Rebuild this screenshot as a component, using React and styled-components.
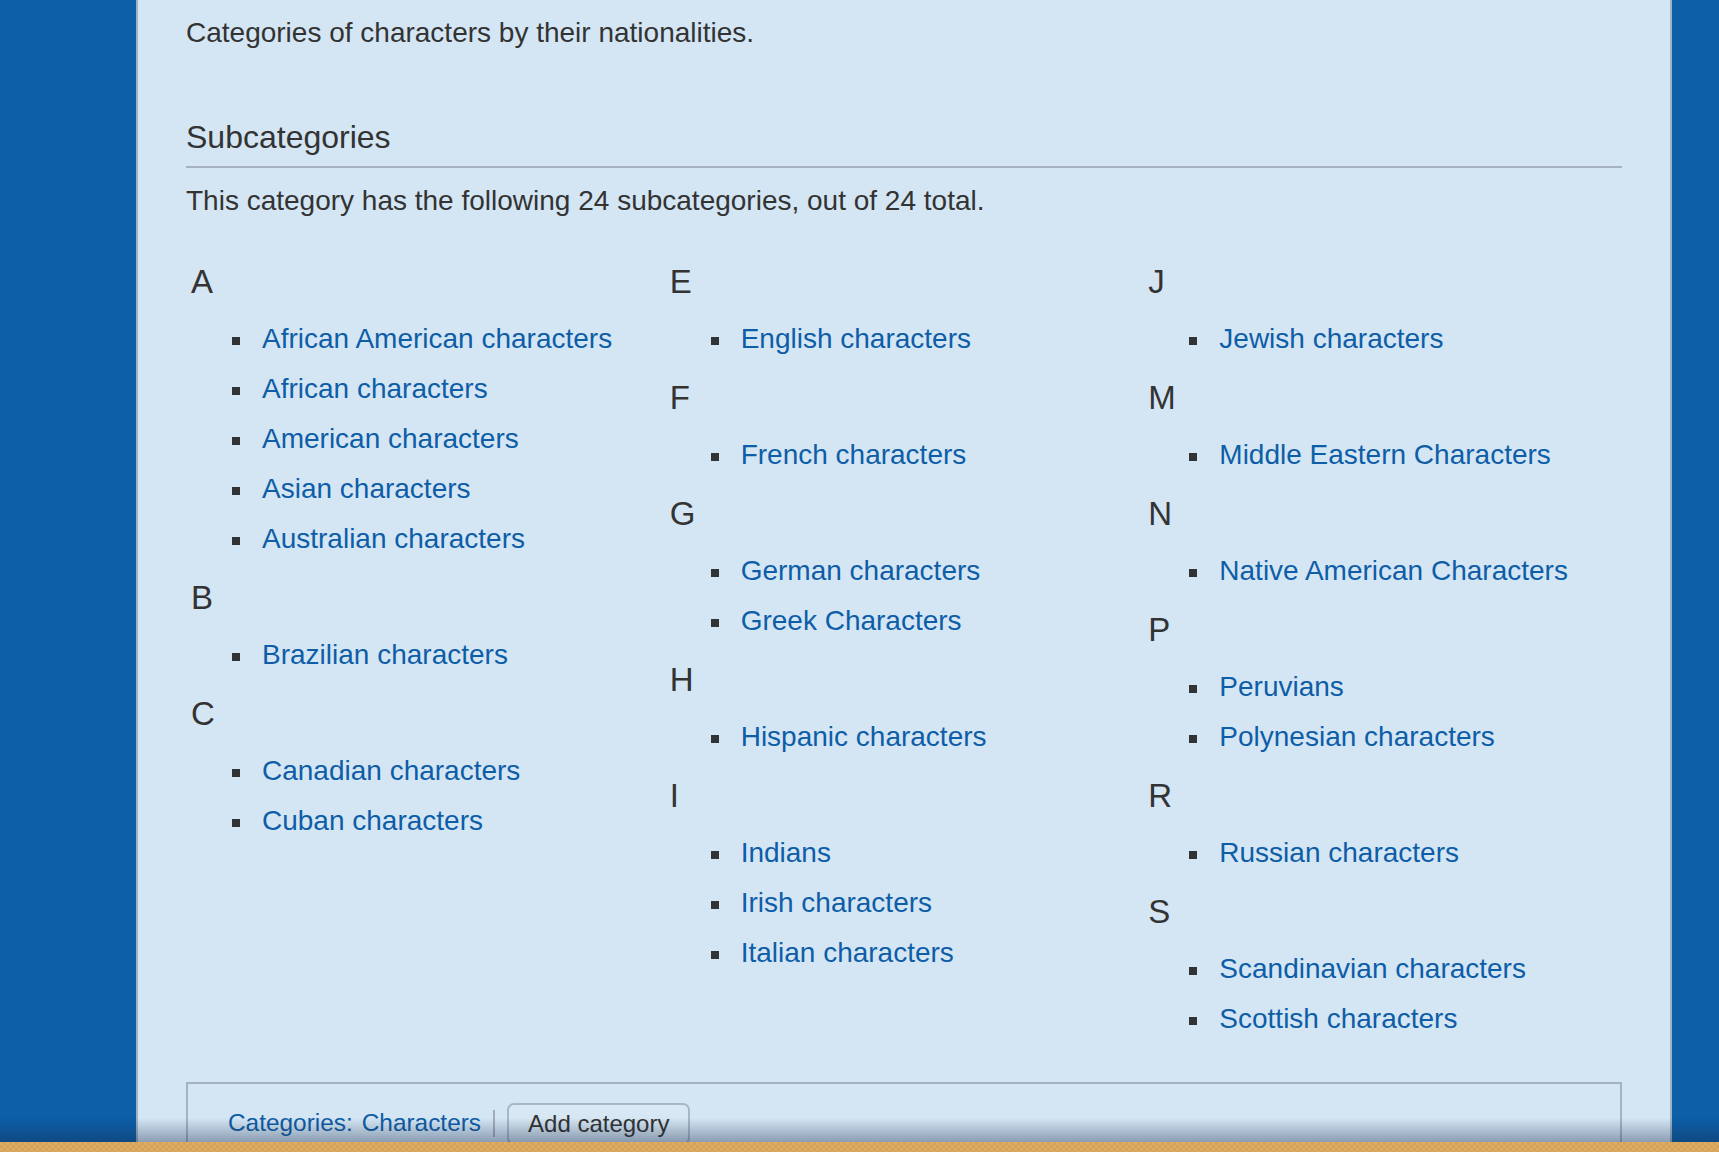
import React from "react";
import styled, { createGlobalStyle } from "styled-components";

const groups = [
  [
    { letter: "A", items: ["African American characters", "African characters", "American characters", "Asian characters", "Australian characters"] },
    { letter: "B", items: ["Brazilian characters"] },
    { letter: "C", items: ["Canadian characters", "Cuban characters"] },
  ],
  [
    { letter: "E", items: ["English characters"] },
    { letter: "F", items: ["French characters"] },
    { letter: "G", items: ["German characters", "Greek Characters"] },
    { letter: "H", items: ["Hispanic characters"] },
    { letter: "I", items: ["Indians", "Irish characters", "Italian characters"] },
  ],
  [
    { letter: "J", items: ["Jewish characters"] },
    { letter: "M", items: ["Middle Eastern Characters"] },
    { letter: "N", items: ["Native American Characters"] },
    { letter: "P", items: ["Peruvians", "Polynesian characters"] },
    { letter: "R", items: ["Russian characters"] },
    { letter: "S", items: ["Scandinavian characters", "Scottish characters"] },
  ],
];

const GlobalStyle = createGlobalStyle`
  html, body {
    margin: 0;
    padding: 0;
    height: 100%;
    overflow: hidden;
    background: #0d5fa8;
  }
  body {
    font-family: "Liberation Sans", Arial, sans-serif;
    color: #333;
  }
`;

const Page = styled.div`
  display: flex;
  min-height: 100vh;
  padding: 0 47px 0 136px;
  box-sizing: border-box;
`;

const Panel = styled.main`
  flex: 1;
  background: #d4e6f4;
  border-left: 2px solid #9fb2c7;
  border-right: 2px solid #9fb2c7;
  padding: 11px 48px 0;
`;

const Intro = styled.p`
  margin: 0;
  font-size: 28px;
  line-height: 44px;
`;

const SectionTitle = styled.h2`
  margin: 62px 0 0;
  padding-bottom: 9px;
  font-size: 32px;
  line-height: 40px;
  font-weight: normal;
  border-bottom: 2px solid #a7b2c0;
`;

const Count = styled.p`
  margin: 11px 0 0;
  font-size: 28px;
  line-height: 44px;
`;

const Columns = styled.div`
  display: grid;
  grid-template-columns: repeat(3, 1fr);
  margin-top: 39px;
  padding-bottom: 24px;
`;

const Group = styled.div`
  margin-bottom: 14px;
`;

const Letter = styled.h3`
  margin: 0 0 12px;
  padding-left: 5px;
  font-size: 33px;
  line-height: 40px;
  font-weight: normal;
`;

const List = styled.ul`
  margin: 0;
  padding: 0 0 0 46px;
  list-style: none;
`;

const Item = styled.li`
  display: flex;
  align-items: center;
  gap: 22px;
  height: 50px;
  font-size: 28px;

  &::before {
    content: "";
    width: 8px;
    height: 8px;
    margin-top: 3px;
    background: #333;
    flex: none;
  }
`;

const Link = styled.a`
  color: #0e5da7;
  text-decoration: none;
`;

const CatBox = styled.div`
  display: flex;
  align-items: center;
  border: 2px solid #a7b2c0;
  border-bottom: none;
  padding: 19px 38px 40px 40px;
  font-size: 24.4px;
`;

const CatLabel = styled(Link)`
  margin: 0 9px 3px 0;
`;

const CatLink = styled(Link)`
  margin-bottom: 3px;
`;

const Separator = styled.span`
  width: 2px;
  height: 27px;
  background: #a3adb9;
  margin: 0 12px 2px 12px;
`;

const AddButton = styled.button`
  height: 42px;
  padding: 0 19px;
  font-family: inherit;
  font-size: 24px;
  color: #333;
  background: linear-gradient(#dae9f5, #cfe1ef);
  border: 2px solid #a9b6c5;
  border-radius: 7px;
`;

const BottomBar = styled.div`
  position: fixed;
  left: 0;
  right: 0;
  bottom: 0;
  height: 10px;
  background-color: #d8a65c;
  background-image: repeating-conic-gradient(#d6a358 0 25%, #ddad66 0 50%);
  background-size: 6px 6px;

  &::before {
    content: "";
    position: absolute;
    left: 0;
    right: 0;
    bottom: 100%;
    height: 24px;
    background: linear-gradient(rgba(20, 40, 70, 0), rgba(20, 40, 70, 0.38));
  }
`;

export default function App() {
  return (
    <>
      <GlobalStyle />
      <Page>
        <Panel>
          <Intro>Categories of characters by their nationalities.</Intro>
          <SectionTitle>Subcategories</SectionTitle>
          <Count>This category has the following 24 subcategories, out of 24 total.</Count>
          <Columns>
            {groups.map((col, i) => (
              <div key={i}>
                {col.map((g) => (
                  <Group key={g.letter}>
                    <Letter>{g.letter}</Letter>
                    <List>
                      {g.items.map((name) => (
                        <Item key={name}>
                          <Link href="#">{name}</Link>
                        </Item>
                      ))}
                    </List>
                  </Group>
                ))}
              </div>
            ))}
          </Columns>
          <CatBox>
            <CatLabel href="#">Categories:</CatLabel>
            <CatLink href="#">Characters</CatLink>
            <Separator />
            <AddButton>Add category</AddButton>
          </CatBox>
        </Panel>
      </Page>
      <BottomBar />
    </>
  );
}
